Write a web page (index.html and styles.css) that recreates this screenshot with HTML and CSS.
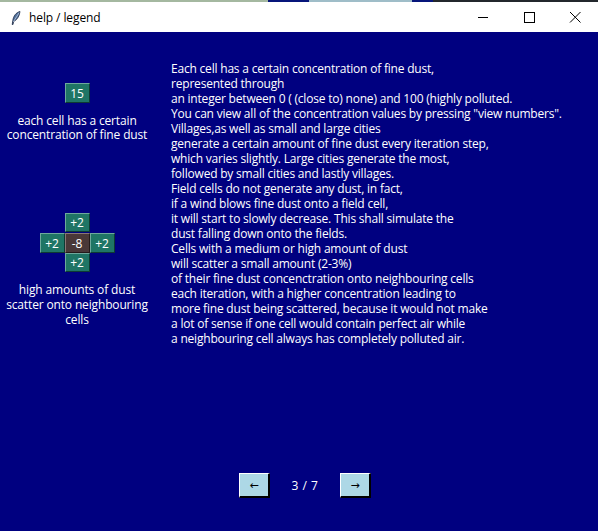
FILE: index.html
```html
<!DOCTYPE html>
<html>
<head>
<meta charset="utf-8">
<link rel="stylesheet" href="styles.css">
</head>
<body>
<div class="window">
  <div class="strip">
    <span class="s1"></span><span class="s2"></span><span class="s3"></span><span class="s4"></span><span class="s5"></span>
  </div>
  <div class="titlebar">
    <svg class="feather" width="10" height="14" viewBox="0 0 10 14">
      <path d="M9 0.5 C5 1.5 2.5 5 1.8 9.5 L1.2 13.5 L2 13.6 L2.6 10.5 C6 9 8.5 5 9 0.5 Z" fill="#4f6f9a" stroke="#1d2a44" stroke-width="0.8"/>
      <path d="M8.2 1.6 L2.3 11" stroke="#c9d6e8" stroke-width="0.7"/>
    </svg>
    <span class="title">help / legend</span>
    <div class="controls">
      <svg class="ctl" width="46" height="30" viewBox="0 0 46 30"><path d="M18 15.5 H28" stroke="#000" stroke-width="1"/></svg>
      <svg class="ctl" width="46" height="30" viewBox="0 0 46 30"><rect x="18.5" y="10.5" width="10" height="10" fill="none" stroke="#000" stroke-width="1"/></svg>
      <svg class="ctl" width="46" height="30" viewBox="0 0 46 30"><path d="M18 10 L28.5 20.5 M28.5 10 L18 20.5" stroke="#000" stroke-width="1"/></svg>
    </div>
  </div>
  <div class="content">
    <div class="legend">
      <div class="cell green single">15</div>
      <div class="caption first">each cell has a certain<br>concentration of fine dust</div>
      <div class="cross">
        <div class="cell green c-top">+2</div>
        <div class="cell green c-left">+2</div>
        <div class="cell brown c-mid">-8</div>
        <div class="cell green c-right">+2</div>
        <div class="cell green c-bottom">+2</div>
      </div>
      <div class="caption second">high amounts of dust<br>scatter onto neighbouring<br>cells</div>
    </div>
    <div class="text">Each cell has a certain concentration of fine dust,<br>represented through<br>an integer between 0 ( (close to) none) and 100 (highly polluted.<br>You can view all of the concentration values by pressing "view numbers".<br>Villages,as well as small and large cities<br>generate a certain amount of fine dust every iteration step,<br>which varies slightly. Large cities generate the most,<br>followed by small cities and lastly villages.<br>Field cells do not generate any dust, in fact,<br>if a wind blows fine dust onto a field cell,<br>it will start to slowly decrease. This shall simulate the<br>dust falling down onto the fields.<br>Cells with a medium or high amount of dust<br>will scatter a small amount (2-3%)<br>of their fine dust concenctration onto neighbouring cells<br>each iteration, with a higher concentration leading to<br>more fine dust being scattered, because it would not make<br>a lot of sense if one cell would contain perfect air while<br>a neighbouring cell always has completely polluted air.</div>
  </div>
  <div class="nav">
    <button class="btn">&larr;</button>
    <span class="page">3 / 7</span>
    <button class="btn">&rarr;</button>
  </div>
</div>
</body>
</html>
```
FILE: styles.css
```css
html, body {
  margin: 0;
  padding: 0;
}
body {
  width: 598px;
  height: 531px;
  overflow: hidden;
  background: #000080;
  font-family: "Open Sans", "Noto Sans", sans-serif;
  font-size: 12px;
}
.window {
  width: 598px;
  height: 531px;
  display: flex;
  flex-direction: column;
  background: #000080;
}
.strip {
  height: 2px;
  display: flex;
}
.strip span { height: 2px; }
.s1 { width: 268px; background: #a4b8a0; }
.s2 { width: 41px; background: #06157a; }
.s3 { width: 103px; background: #9fbdc8; }
.s4 { width: 21px; background: #06157a; }
.s5 { flex: 1; background: #23272c; }
.titlebar {
  height: 30px;
  background: #ffffff;
  display: flex;
  align-items: center;
  color: #000;
}
.feather {
  margin-left: 11px;
  margin-top: 1px;
}
.title {
  margin-left: 8px;
  font-family: "Open Sans", "Noto Sans", sans-serif;
  font-size: 12px;
  letter-spacing: -0.1px;
  color: #000;
}
.controls {
  margin-left: auto;
  display: flex;
}
.ctl { display: block; }
.content {
  display: flex;
  height: 410px;
}
.legend {
  width: 154px;
  display: flex;
  flex-direction: column;
  align-items: center;
  color: #fff;
}
.cell {
  box-sizing: border-box;
  width: 25px;
  height: 20px;
  display: flex;
  align-items: center;
  justify-content: center;
  color: #fff;
  font-size: 12px;
  border-top: 1px solid #6ea89c;
  border-left: 1px solid #6ea89c;
  border-right: 1px solid #0d3a33;
  border-bottom: 1px solid #0d3a33;
}
.green { background: #1f7565; }
.brown {
  background: #4a3838;
  border-top-color: #8a7676;
  border-left-color: #8a7676;
  border-right-color: #241a1a;
  border-bottom-color: #241a1a;
}
.single {
  margin-top: 51px;
}
.caption {
  text-align: center;
  line-height: 14px;
  letter-spacing: -0.15px;
}
.caption.first { margin-top: 11px; }
.caption.second { line-height: 15px; margin-top: 11px; }
.cross {
  margin-top: 71px;
  display: grid;
  grid-template-columns: 25px 25px 25px;
  grid-template-rows: 20px 19px 19px;
}
.c-top { grid-column: 2; grid-row: 1; height: 19px; }
.c-left { grid-column: 1; grid-row: 2; }
.c-mid { grid-column: 2; grid-row: 2; }
.c-right { grid-column: 3; grid-row: 2; }
.c-bottom { grid-column: 2; grid-row: 3; height: 19px; margin-top: 1px; }
.text {
  margin-left: 17px;
  margin-top: 29px;
  color: #fff;
  line-height: 15px;
  letter-spacing: -0.2px;
  white-space: nowrap;
}
.nav {
  display: flex;
  align-items: center;
  justify-content: center;
  margin-top: 31px;
  padding-left: 12px;
}
.btn {
  box-sizing: border-box;
  width: 31px;
  height: 25px;
  padding: 0;
  background: #add8e6;
  border-top: 1px solid #ffffff;
  border-left: 1px solid #ffffff;
  border-right: 2px solid #000000;
  border-bottom: 2px solid #000000;
  font-family: "DejaVu Sans", sans-serif;
  font-size: 11px;
  color: #000;
  display: flex;
  align-items: center;
  justify-content: center;
}
.page {
  color: #fff;
  width: 70px;
  text-align: center;
  letter-spacing: 0.5px;
}
```
